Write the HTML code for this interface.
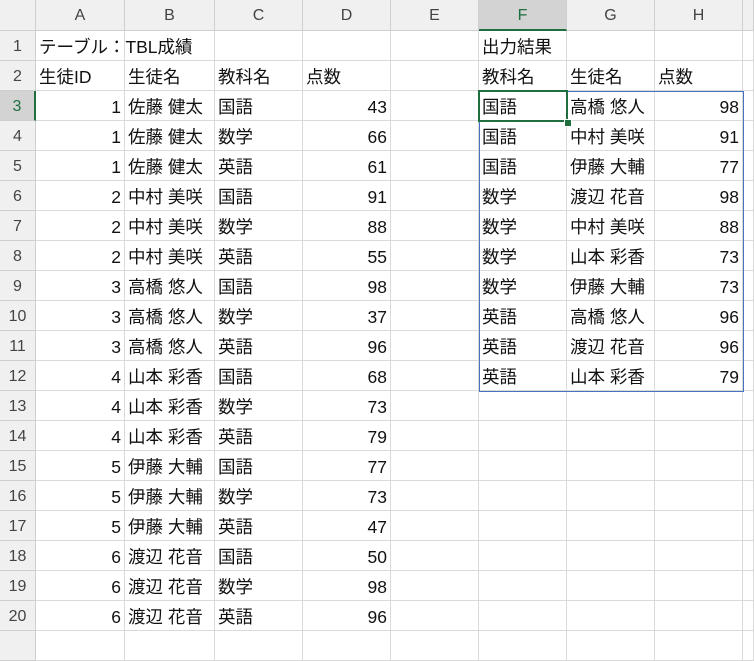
<!DOCTYPE html>
<html><head><meta charset="utf-8"><style>
body{margin:0;width:754px;height:641px;overflow:hidden;background:#fff;font-family:"Liberation Sans","Noto Sans CJK JP",sans-serif;position:relative}
.c{position:absolute;box-sizing:border-box;border-right:1px solid #dadada;border-bottom:1px solid #dadada;font-size:17.5px;color:#111;line-height:32px;white-space:nowrap;overflow:visible;padding:0 3px}
.h{background:#f0f0f0;color:#444;text-align:center;font-size:16px;border-right:1px solid #cfcfcf;border-bottom:1px solid #cfcfcf}
.r{text-align:right;padding-right:3px}
</style></head><body>
<div id="g"></div>
<div style="position:absolute;left:479px;top:91px;width:265px;height:301px;box-sizing:border-box;border:1px solid #4a72c4"></div>
<div style="position:absolute;left:478px;top:90px;width:90px;height:32px;box-sizing:border-box;border:2px solid #1e6e3f"></div>
<div style="position:absolute;left:564px;top:119px;width:6px;height:6px;background:#1e6e3f;border:1px solid #fff"></div>
<script>
const cols=[0,36,125,215,303,391,479,567,655,743,754];
const letters=['','A','B','C','D','E','F','G','H',''];
const data={
1:['テーブル：TBL成績','','','','','出力結果','',''],
2:['生徒ID','生徒名','教科名','点数','','教科名','生徒名','点数'],
};
const L=[[1,'佐藤 健太','国語',43],[1,'佐藤 健太','数学',66],[1,'佐藤 健太','英語',61],[2,'中村 美咲','国語',91],[2,'中村 美咲','数学',88],[2,'中村 美咲','英語',55],[3,'高橋 悠人','国語',98],[3,'高橋 悠人','数学',37],[3,'高橋 悠人','英語',96],[4,'山本 彩香','国語',68],[4,'山本 彩香','数学',73],[4,'山本 彩香','英語',79],[5,'伊藤 大輔','国語',77],[5,'伊藤 大輔','数学',73],[5,'伊藤 大輔','英語',47],[6,'渡辺 花音','国語',50],[6,'渡辺 花音','数学',98],[6,'渡辺 花音','英語',96]];
const R=[['国語','高橋 悠人',98],['国語','中村 美咲',91],['国語','伊藤 大輔',77],['数学','渡辺 花音',98],['数学','中村 美咲',88],['数学','山本 彩香',73],['数学','伊藤 大輔',73],['英語','高橋 悠人',96],['英語','渡辺 花音',96],['英語','山本 彩香',79]];
let h='';
function cell(x,y,w,hh,t,cls,st){h+=`<div class="c ${cls||''}" style="left:${x}px;top:${y}px;width:${w}px;height:${hh}px;${st||''}">${t}</div>`;}
for(let i=0;i<10;i++){let st='line-height:31px;';if(i==6)st+='background:#d3d3d3;color:#1e6e3f;border-bottom:2px solid #1e6e3f;';cell(cols[i],0,cols[i+1]-cols[i],31,letters[i],'h',st);}
for(let r=1;r<=21;r++){
 const y=31+(r-1)*30;
 let st='';if(r==3)st='background:#d3d3d3;color:#1e6e3f;border-right:2px solid #1e6e3f;';
 cell(0,y,36,30,r<=20?r:'','h',st+'line-height:32px;');
 let vals=['','','','','','','',''];let right=[0,0,0,0,0,0,0,0];
 if(data[r])vals=data[r];
 if(r>=3&&r<=20){const d=L[r-3];vals=[d[0],d[1],d[2],d[3],'','','',''];right[0]=1;right[3]=1;}
 if(r>=3&&r<=12){const d=R[r-3];vals[5]=d[0];vals[6]=d[1];vals[7]=d[2];right[7]=1;}
 for(let i=1;i<10;i++){cell(cols[i],y,cols[i+1]-cols[i],30,i<=8?vals[i-1]:'',i<=8&&right[i-1]?'r':'');}
}
document.getElementById('g').innerHTML=h;
</script>
</body></html>
